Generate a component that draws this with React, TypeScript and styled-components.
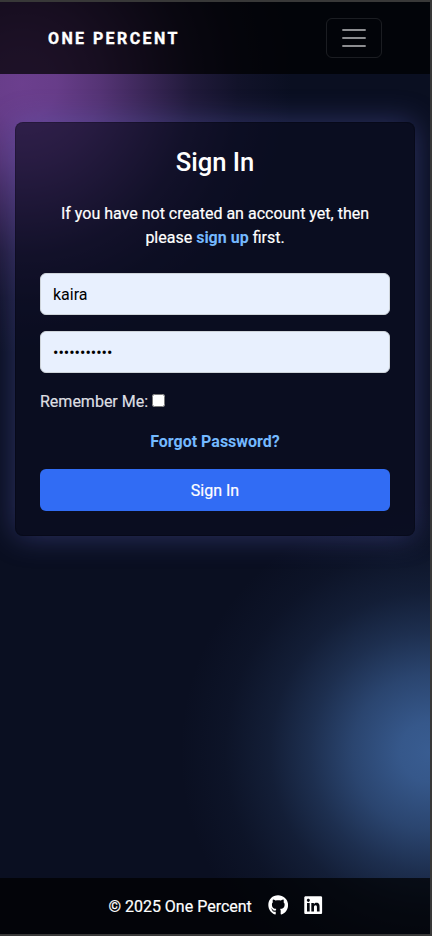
import React from "react";
import styled, { createGlobalStyle } from "styled-components";
import { FaGithub, FaLinkedin } from "react-icons/fa";

const GlobalStyle = createGlobalStyle`
  *, *::before, *::after { box-sizing: border-box; }
  body {
    margin: 0;
    background: #383838;
    font-family: Roboto, "Liberation Sans", sans-serif;
    font-size: 16px;
    line-height: 24px;
    color: #fff;
    -webkit-text-stroke: 0.2px currentColor;
  }
`;

const Frame = styled.div`
  height: 936px;
  padding: 2px 2px 2px 0;
  background: #383838;
`;

const Page = styled.div`
  height: 932px;
  display: flex;
  flex-direction: column;
  overflow: hidden;
  background:
    radial-gradient(circle 270px at 22px 82px,
      rgba(122, 70, 158, 0.87) 0%, rgba(122, 70, 158, 0.83) 13%,
      rgba(122, 70, 158, 0.67) 29%, rgba(122, 70, 158, 0.42) 47%,
      rgba(122, 70, 158, 0.2) 63%, rgba(122, 70, 158, 0.07) 80%,
      rgba(122, 70, 158, 0) 100%),
    radial-gradient(circle 250px at 430px 750px,
      rgba(66, 108, 168, 0.83) 0%, rgba(66, 108, 168, 0.78) 12%,
      rgba(66, 108, 168, 0.58) 31%, rgba(66, 108, 168, 0.34) 48%,
      rgba(66, 108, 168, 0.16) 64%, rgba(66, 108, 168, 0.05) 82%,
      rgba(66, 108, 168, 0) 100%),
    #0a0f21;
`;

const Header = styled.header`
  flex: none;
  height: 72px;
  padding: 0 48px;
  display: flex;
  align-items: center;
  justify-content: space-between;
  background: rgba(0, 0, 0, 0.72);
`;

const Brand = styled.a`
  padding-top: 2px;
  font-weight: 700;
  letter-spacing: 2.4px;
  text-transform: uppercase;
  -webkit-text-stroke-width: 0.35px;
`;

const MenuButton = styled.button`
  width: 56px;
  height: 40px;
  padding: 0;
  display: grid;
  place-items: center;
  border: 1px solid rgba(255, 255, 255, 0.1);
  border-radius: 6px;
  background: transparent;
`;

const Main = styled.main`
  flex: 1;
  padding: 48px 15px 0;
`;

const Card = styled.section`
  height: 414px;
  padding: 24px;
  border: 1px solid rgba(0, 0, 0, 0.175);
  border-radius: 8px;
  background: rgba(10, 12, 32, 0.6);
  box-shadow: 0 0 30px rgba(100, 105, 205, 0.4);
`;

const Title = styled.h1`
  margin: 0 0 24px;
  font-size: 25.6px;
  line-height: 31px;
  font-weight: 500;
  text-align: center;
  -webkit-text-stroke-width: 0;
`;

const Lead = styled.p`
  margin: 0 0 23px;
  text-align: center;
`;

const Link = styled.a`
  color: #74b9ff;
  font-weight: 700;
  -webkit-text-stroke-width: 0;
`;

const Form = styled.form`
  display: flex;
  flex-direction: column;
`;

const Field = styled.input`
  height: 42px;
  margin: 0 0 16px;
  padding: 8px 12px;
  border: 1px solid #ced4da;
  border-radius: 6px;
  outline: none;
  background: #e8f0fe;
  color: #000;
  font: inherit;
  -webkit-text-stroke-width: 0;
`;

const Remember = styled.label`
  height: 24px;
  display: flex;
  align-items: center;
  gap: 4px;
  color: #dedfe2;
`;

const RememberText = styled.span`
  padding-top: 2px;
`;

const Check = styled.input`
  width: 13px;
  height: 13px;
  margin: -2px 0 0;
`;

const Forgot = styled(Link)`
  margin: 17px 0 15px;
  text-align: center;
`;

const Submit = styled.button`
  height: 42px;
  padding: 1px 0 0;
  border: 0;
  border-radius: 6px;
  background: #316cf4;
  color: #fff;
  font: inherit;
  -webkit-text-stroke: 0.2px #fff;
`;

const Footer = styled.footer`
  flex: none;
  height: 56px;
  padding-left: 2px;
  display: flex;
  align-items: center;
  justify-content: center;
  gap: 16px;
  background: rgba(0, 0, 0, 0.7);

  svg {
    display: block;
    width: auto;
    height: 20.4px;
  }
`;

const Copyright = styled.span`
  padding-top: 2px;
`;

const IconLink = styled.a`
  display: block;
  padding-bottom: 1px;

  & + & {
    margin-left: -1px;
  }
`;

export default function App() {
  return (
    <Frame>
      <GlobalStyle />
      <Page>
        <Header>
          <Brand>One Percent</Brand>
          <MenuButton aria-label="Toggle navigation">
            <svg width="30" height="30" viewBox="0 0 30 30">
              <path stroke="rgba(255,255,255,.55)" strokeMiterlimit="10" strokeWidth="2" d="M3.3 7h23.4M3.3 15h23.4M3.3 23h23.4" />
            </svg>
          </MenuButton>
        </Header>
        <Main>
          <Card>
            <Title>Sign In</Title>
            <Lead>
              If you have not created an account yet, then
              <br />
              please <Link>sign up</Link> first.
            </Lead>
            <Form onSubmit={(e) => e.preventDefault()}>
              <Field type="text" defaultValue="kaira" aria-label="Username" />
              <Field type="password" defaultValue="percent2025" aria-label="Password" />
              <Remember>
                <RememberText>Remember Me:</RememberText>
                <Check type="checkbox" />
              </Remember>
              <Forgot>Forgot Password?</Forgot>
              <Submit type="submit">Sign In</Submit>
            </Form>
          </Card>
        </Main>
        <Footer>
          <Copyright>© 2025 One Percent</Copyright>
          <IconLink aria-label="GitHub"><FaGithub /></IconLink>
          <IconLink aria-label="LinkedIn"><FaLinkedin /></IconLink>
        </Footer>
      </Page>
    </Frame>
  );
}
